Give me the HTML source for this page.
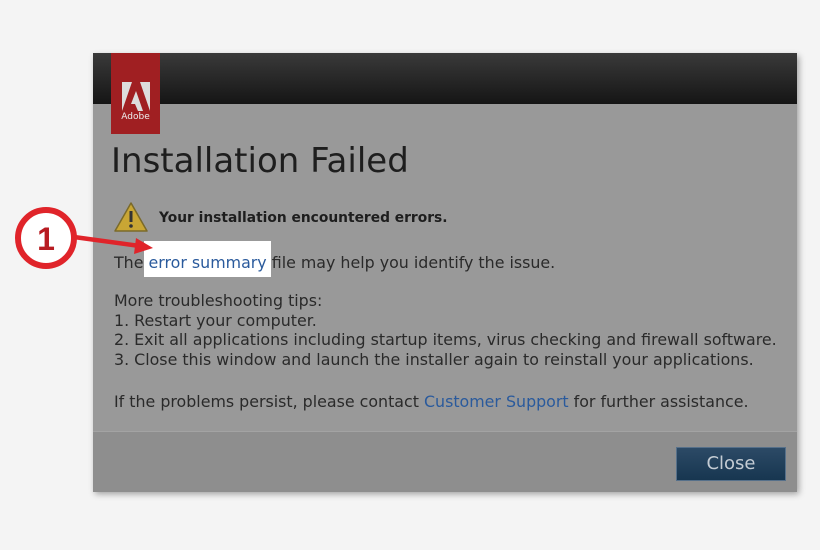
<!DOCTYPE html>
<html><head><style>
body{margin:0;width:820px;height:550px;background:#f4f4f4;position:relative;overflow:hidden;font-family:"DejaVu Sans","Liberation Sans",sans-serif;}
.dlg{position:absolute;left:93px;top:53px;width:704px;height:438px;background:#999;box-shadow:2px 3px 6px rgba(0,0,0,.35);}
.hdr{position:absolute;left:0;top:0;width:704px;height:51px;background:linear-gradient(#3a3a3a,#151515);}
.logo{position:absolute;left:18px;top:0;width:49px;height:81px;background:#a01f22;color:#eee;font-size:9px;text-align:center;}
.ft{position:absolute;left:0;top:378px;width:704px;height:60px;background:#8e8e8e;border-top:1px solid #a3a3a3;}
.btn{position:absolute;left:583px;top:15px;width:110px;height:34px;background:linear-gradient(#2c4a66,#173650);border:1px solid #56708a;box-sizing:border-box;color:#c4ccd4;font-size:18px;text-align:center;line-height:32px;}
.t{position:absolute;color:#2a2a2a;white-space:nowrap;font-size:15.85px;}
a{color:#2a5a9c;text-decoration:none}
</style></head><body>
<div class="dlg">
 <div class="hdr"></div>
 <div class="logo"><svg width="30" height="34" style="margin-top:28px" viewBox="0 0 30 34"><polygon points="1,1 11,1 1,30" fill="#ddd"/><polygon points="19,1 29,1 29,30" fill="#ddd"/><polygon points="15,10 22,30 17,30 14,23 10,23" fill="#ddd"/></svg><div style="margin-top:-6px">Adobe</div></div>
 <div class="t" style="left:18px;top:88px;font-size:34px;color:#1e1e1e">Installation Failed</div>
 <svg style="position:absolute;left:20px;top:148px" width="36" height="32" viewBox="0 0 36 32"><polygon points="18,2 34,30 2,30" fill="#c9a634" stroke="#7a6a2a" stroke-width="1.5" stroke-linejoin="round"/><rect x="16.5" y="10" width="3" height="11" fill="#333"/><circle cx="18" cy="25" r="1.8" fill="#333"/></svg>
 <div class="t" style="left:66px;top:157px;font-size:13.8px;font-weight:bold;color:#1e1e1e">Your installation encountered errors.</div>
 <div style="position:absolute;left:51px;top:188px;width:127px;height:36px;background:#fff"></div>
 <div class="t" style="left:21px;top:200px">The <a>error summary</a> file may help you identify the issue.</div>
 <div class="t" style="left:21px;top:238px;line-height:19.5px">More troubleshooting tips:<br>1. Restart your computer.<br>2. Exit all applications including startup items, virus checking and firewall software.<br>3. Close this window and launch the installer again to reinstall your applications.</div>
 <div class="t" style="left:21px;top:339px">If the problems persist, please contact <a>Customer Support</a> for further assistance.</div>
 <div class="ft"><div class="btn">Close</div></div>
</div>
<svg style="position:absolute;left:0;top:0" width="200" height="300">
 <line x1="74" y1="237" x2="140" y2="246" stroke="#e0242a" stroke-width="4.5"/>
 <polygon points="153,248 136,238 134,254" fill="#e0242a"/>
 <circle cx="46" cy="238" r="28" fill="#fff" stroke="#e0242a" stroke-width="6"/>
 <text x="46" y="250" text-anchor="middle" font-family="Liberation Sans" font-weight="bold" font-size="32" fill="#b81c22">1</text>
</svg>
</body></html>
